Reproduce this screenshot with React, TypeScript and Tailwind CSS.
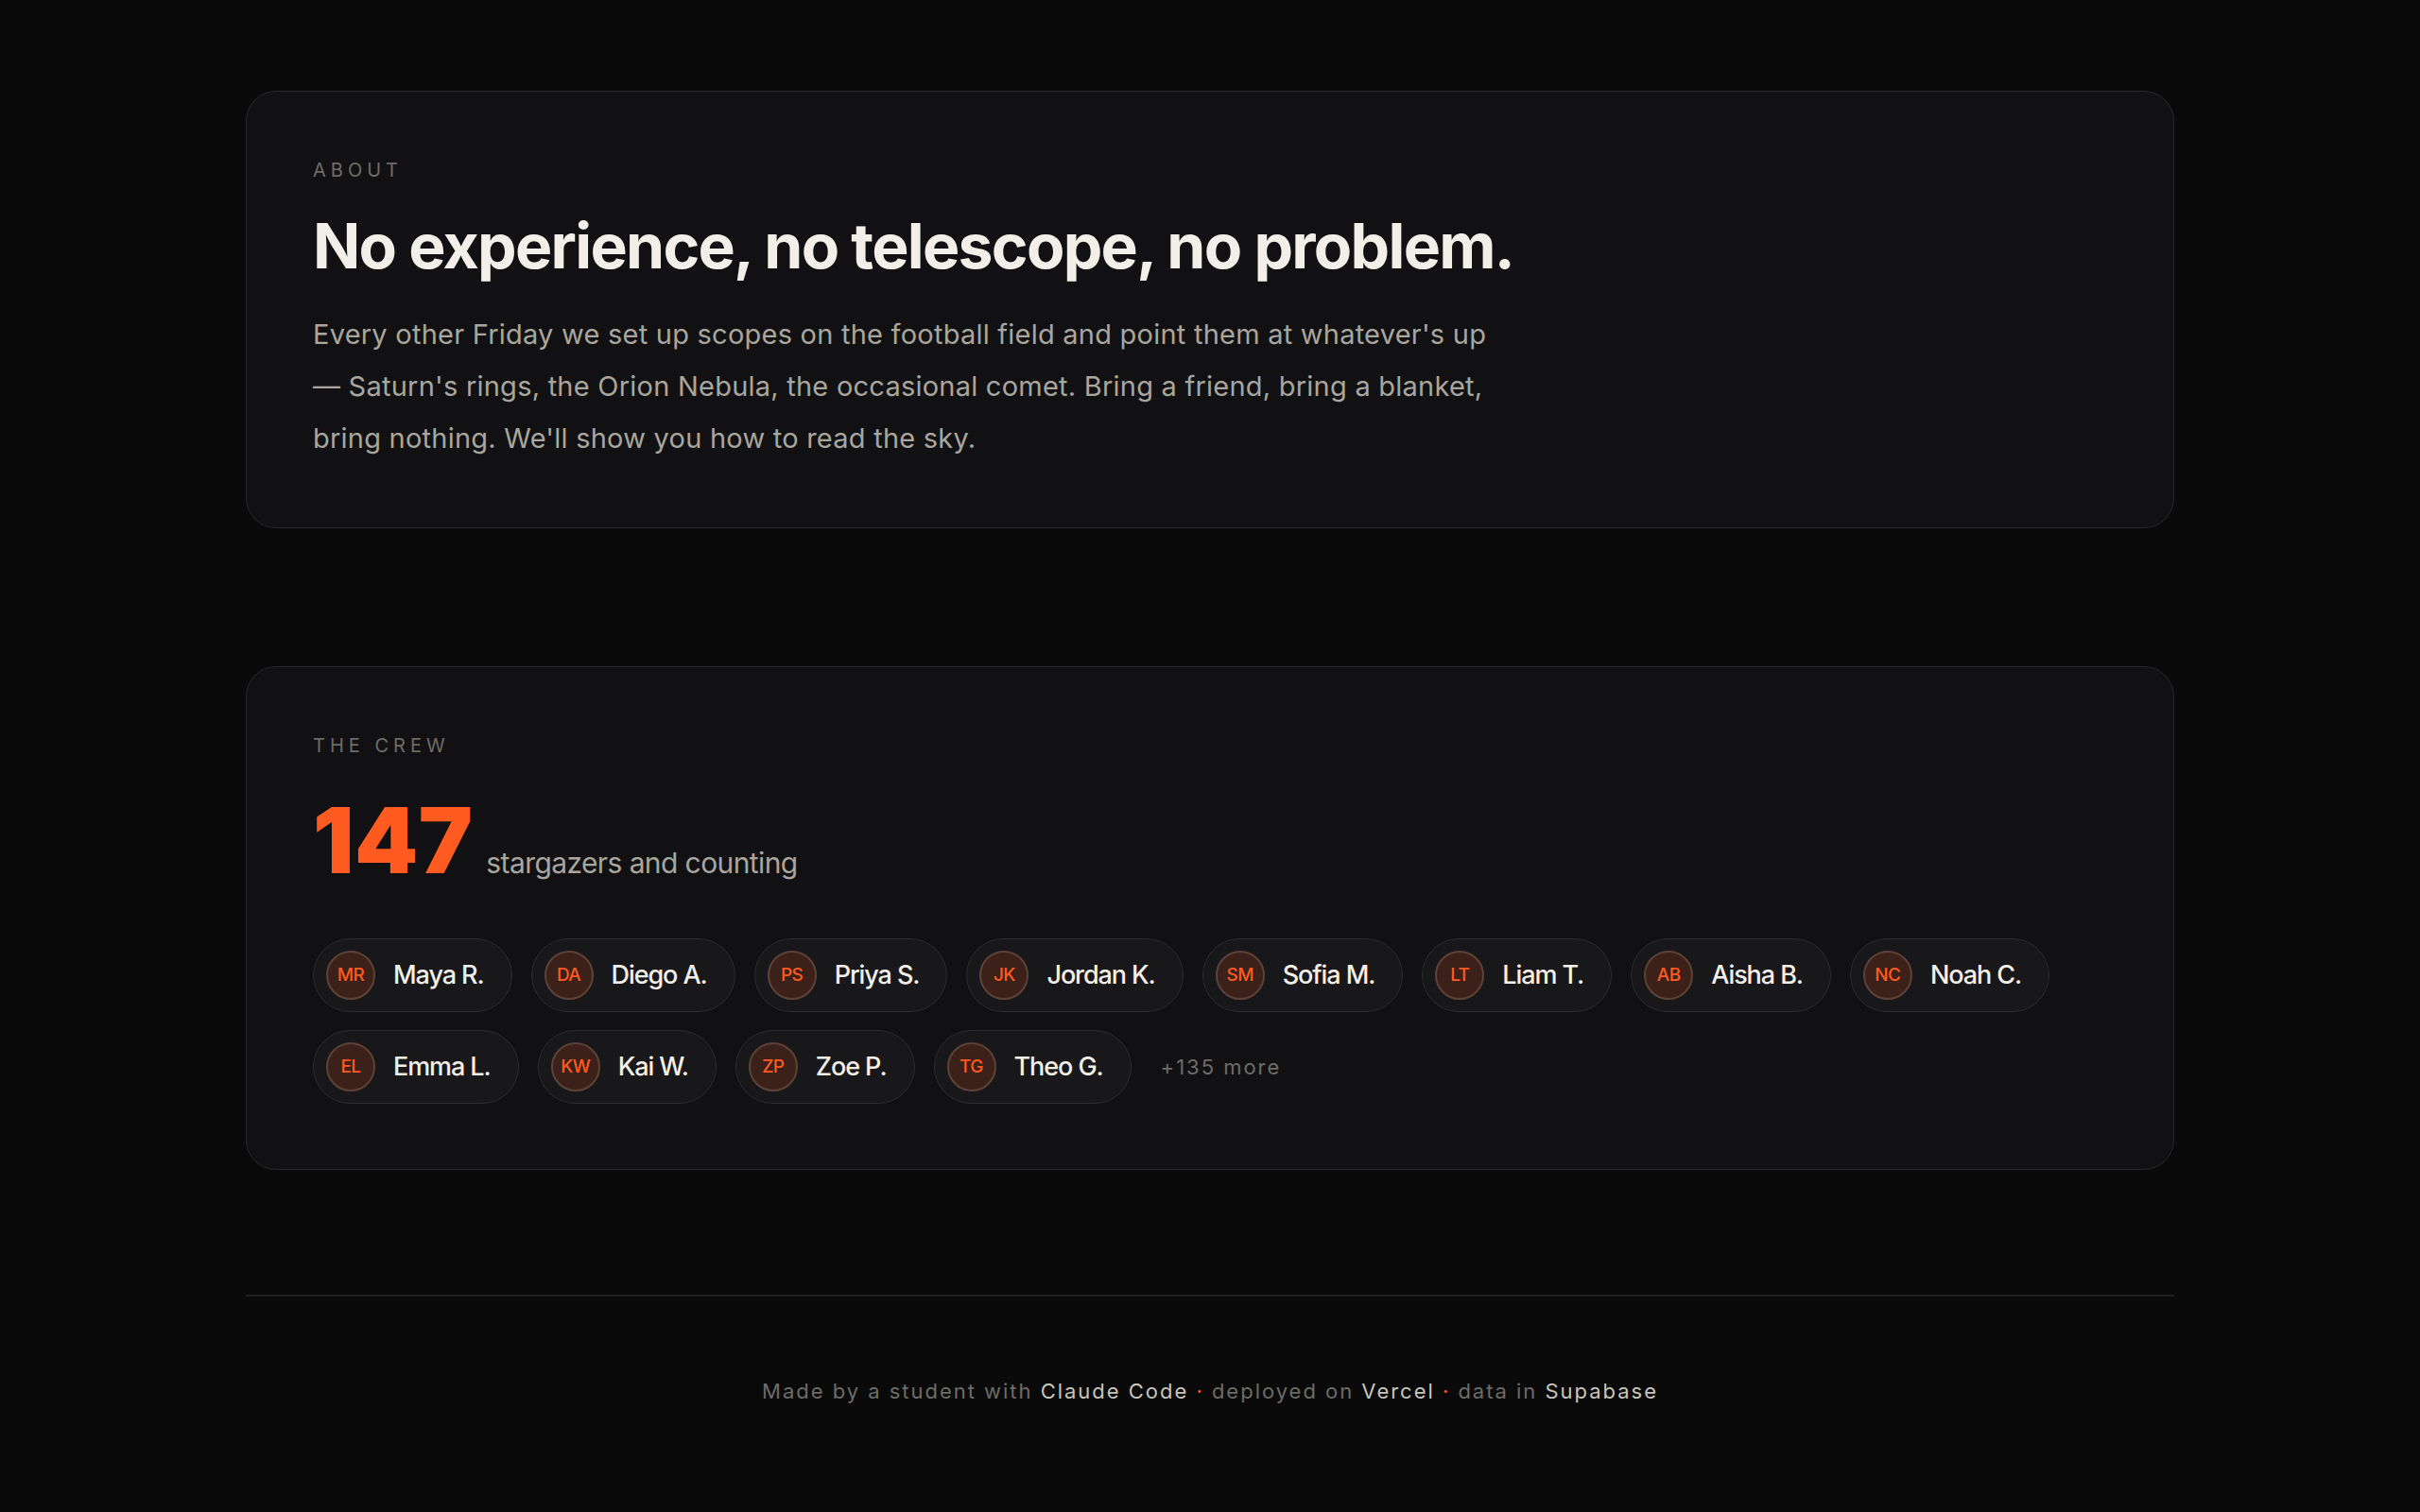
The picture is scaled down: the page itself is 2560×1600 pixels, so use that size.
const CREW = [
  { initials: "MR", name: "Maya R." },
  { initials: "DA", name: "Diego A." },
  { initials: "PS", name: "Priya S." },
  { initials: "JK", name: "Jordan K." },
  { initials: "SM", name: "Sofia M." },
  { initials: "LT", name: "Liam T." },
  { initials: "AB", name: "Aisha B." },
  { initials: "NC", name: "Noah C." },
  { initials: "EL", name: "Emma L." },
  { initials: "KW", name: "Kai W." },
  { initials: "ZP", name: "Zoe P." },
  { initials: "TG", name: "Theo G." },
];

const TOTAL = 147;

function Label({ children }: { children: string }) {
  return (
    <p className="text-[20px] leading-[32px] uppercase tracking-[0.25em] text-[#6e6c66]">
      {children}
    </p>
  );
}

export default function App() {
  return (
    <div className="min-h-screen bg-[#0a0a0a] font-['Inter','Liberation_Sans',sans-serif] text-[#f2efe8]">
      <main className="mx-auto max-w-[2040px] pt-[96px] pb-[100px]">
        <section className="rounded-[32px] border border-[#29292c] bg-[#111113] px-[70px] pt-[67px] pb-[67px]">
          <Label>About</Label>
          <h1 className="mt-[24px] text-[66px] font-bold leading-[80px] tracking-[-0.026em] text-[#f2efe8]">
            No experience, no telescope, no problem.
          </h1>
          <p className="mt-[26px] max-w-[1262px] text-[29px] leading-[55px] tracking-[0.008em] text-[#a9a69e]">
            Every other Friday we set up scopes on the football field and point them at whatever's up
            — Saturn's rings, the Orion Nebula, the occasional comet. Bring a friend, bring a blanket,
            bring nothing. We'll show you how to read the sky.
          </p>
        </section>

        <section className="mt-[146px] rounded-[32px] border border-[#29292c] bg-[#111113] px-[70px] pt-[67px] pb-[69px]">
          <Label>The crew</Label>
          <div className="mt-[36px] flex items-baseline gap-[14px]">
            <span className="text-[96px] font-black leading-[96px] tracking-[0.005em] text-[#ff5a1f]">
              {TOTAL}
            </span>
            <span className="text-[30px] tracking-[-0.02em] text-[#a9a69e]">
              stargazers and counting
            </span>
          </div>

          <div className="mt-[56px] flex flex-wrap items-center gap-x-[20px] gap-y-[19px]">
            {CREW.map((c) => (
              <div
                key={c.initials}
                className="flex items-center gap-[19px] rounded-full border border-[#2d2d30] bg-[#18181b] py-[12px] pl-[13px] pr-[29px]"
              >
                <span className="flex h-[52px] w-[52px] items-center justify-center rounded-full border-2 border-[#5e4236] bg-[#3b2119] text-[19px] font-medium tracking-[-0.03em] text-[#ff5a1f]">
                  {c.initials}
                </span>
                <span className="text-[27px] font-medium tracking-[-0.04em] text-[#f2efe8]">
                  {c.name}
                </span>
              </div>
            ))}
            <span className="ml-[11px] text-[22px] tracking-[0.09em] text-[#6e6c66]">
              +{TOTAL - CREW.length} more
            </span>
          </div>
        </section>

        <div className="mt-[132px] border-t-2 border-[#1f1f21]" />

        <footer className="pt-[84px] text-center text-[22px] tracking-[0.09em] text-[#6e6c66]">
          Made by a student with <span className="text-[#c8c5bc]">Claude Code</span>
          <span className="text-[#ff5a1f]"> · </span>
          deployed on <span className="text-[#c8c5bc]">Vercel</span>
          <span className="text-[#ff5a1f]"> · </span>
          data in <span className="text-[#c8c5bc]">Supabase</span>
        </footer>
      </main>
    </div>
  );
}
